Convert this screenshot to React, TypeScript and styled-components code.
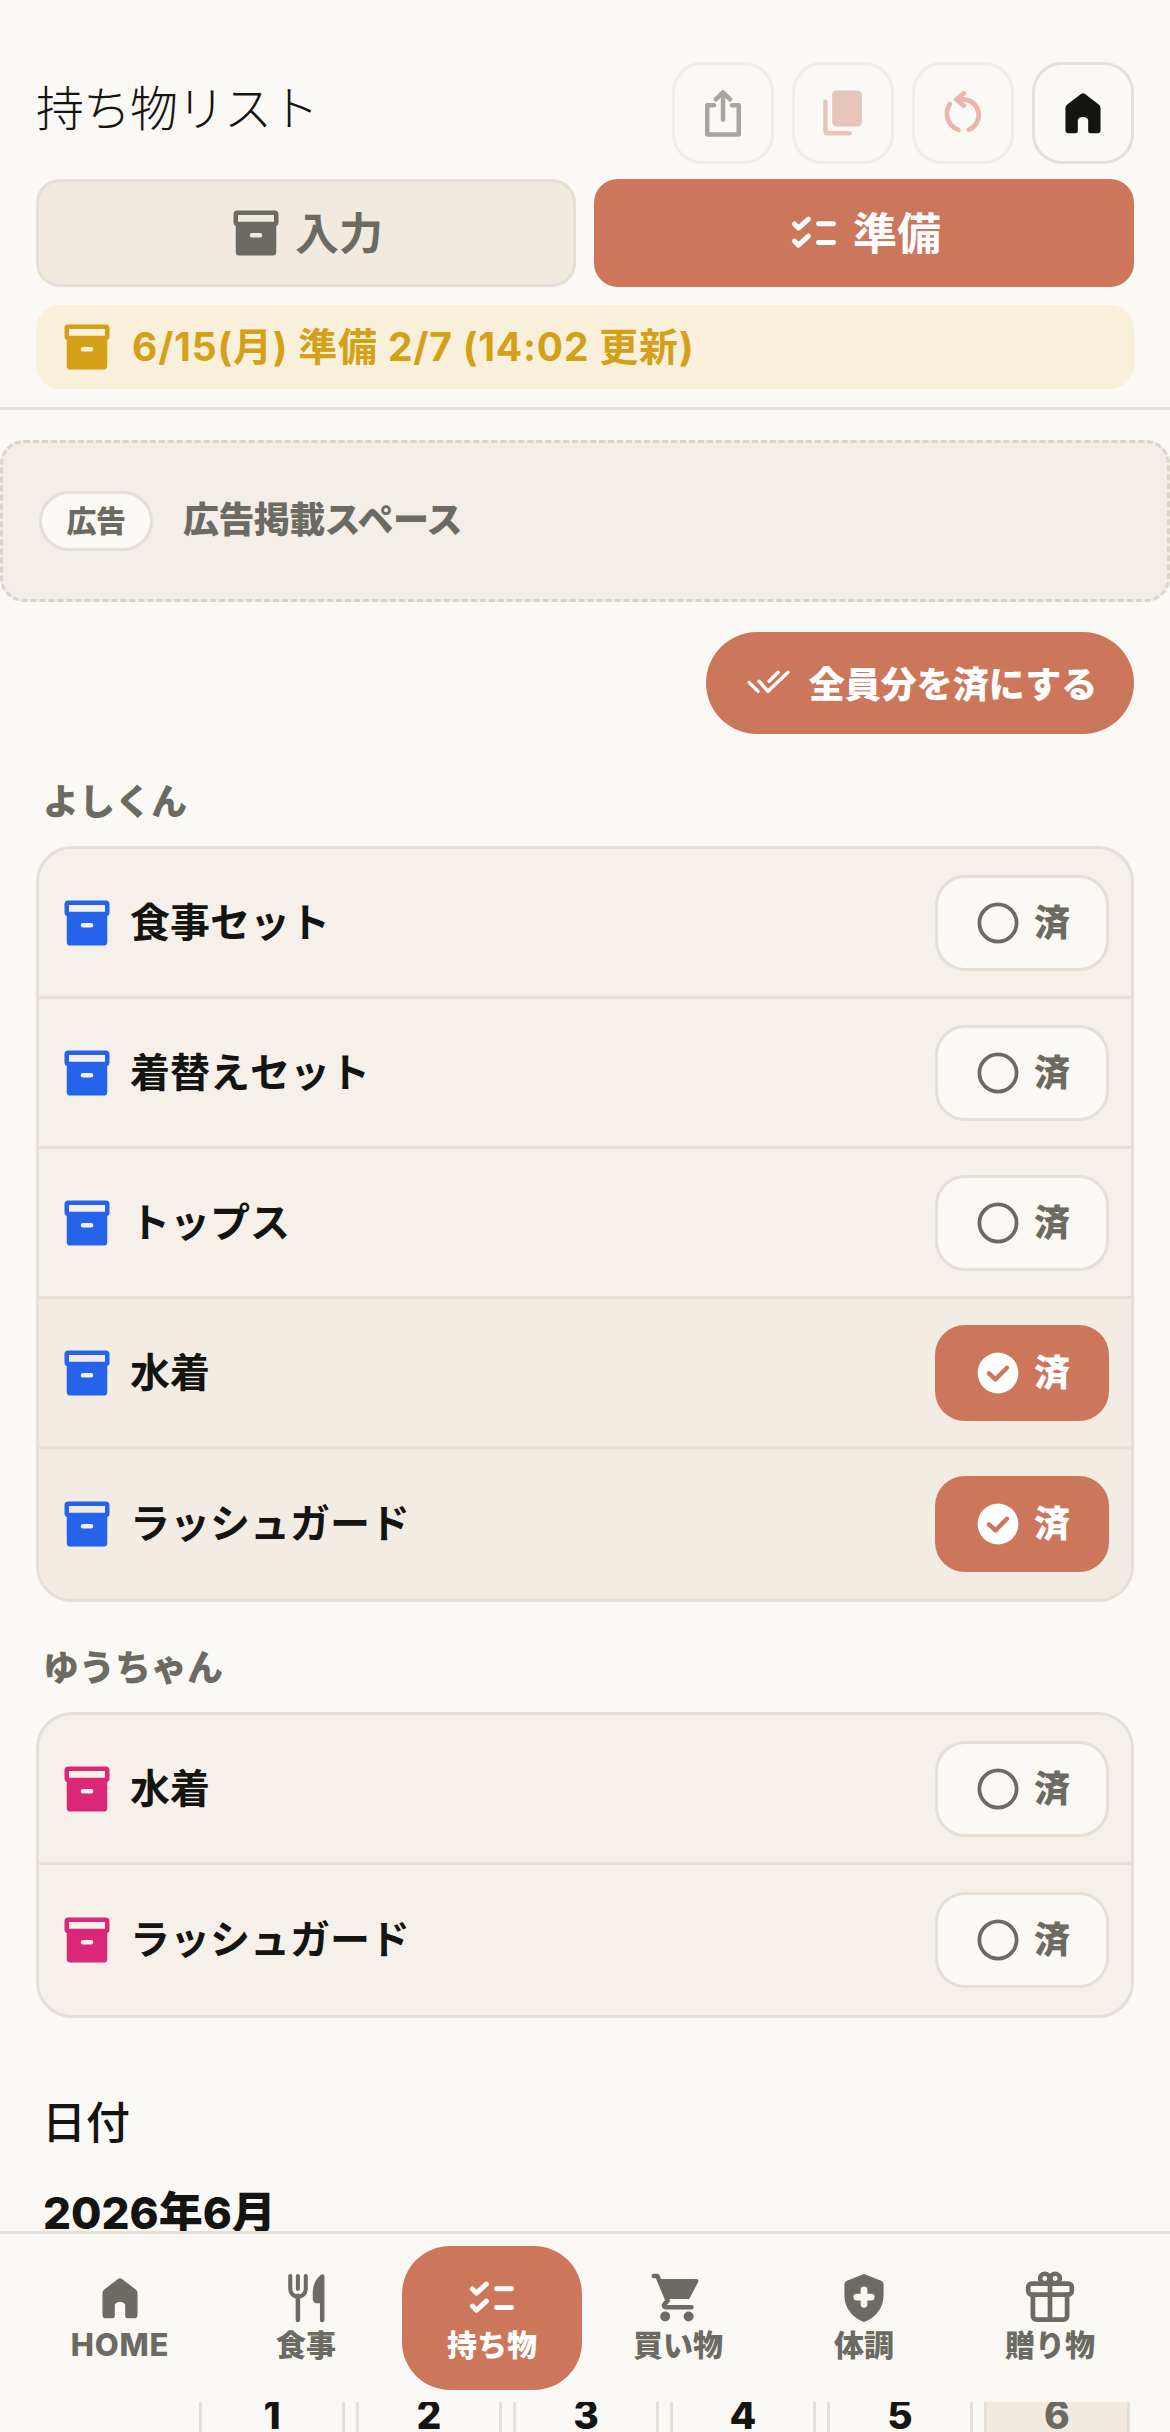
import React from 'react';
import styled, { createGlobalStyle } from 'styled-components';

const INK = '#141412';
const MUTED = '#6B6A63';
const ACCENT = '#CC775B';
const LINE = '#E5DFD8';
const PAGE = '#FBF9F5';
const FONT = '"Inter", "Noto Sans CJK JP", sans-serif';

const Global = createGlobalStyle`
  html, body { margin: 0; padding: 0; height: 2432px; overflow: hidden; background: ${PAGE}; }
  body { font-family: ${FONT}; color: ${INK}; }
  * { box-sizing: border-box; }
`;

const Page = styled.div`
  width: 1170px;
  height: 2432px;
  overflow: hidden;
`;
const Header = styled.header`
  padding: 62px 36px 18px;
  border-bottom: 3px solid ${LINE};
  display: flex;
  flex-direction: column;
`;
const TitleRow = styled.div`
  display: flex;
  align-items: center;
  justify-content: space-between;
  height: 102px;
`;
const Title = styled.h1`
  margin: 0;
  padding-bottom: 16px;
  font-family: "Liberation Serif", "Noto Sans CJK JP", serif;
  font-size: 48px;
  font-weight: 300;
  letter-spacing: -1px;
  color: ${INK};
`;
const ToolGroup = styled.div`
  display: flex;
  gap: 18px;
`;
const ToolButton = styled.button<{ $tone: string; $line: string }>`
  width: 102px;
  height: 102px;
  padding: 0;
  border-radius: 30px;
  border: 3px solid ${p => p.$line};
  background: ${PAGE};
  color: ${p => p.$tone};
  display: flex;
  align-items: center;
  justify-content: center;
`;
const Tabs = styled.div`
  display: grid;
  grid-template-columns: 1fr 1fr;
  gap: 18px;
  margin-top: 15px;
`;
const Tab = styled.button<{ $active?: boolean }>`
  height: 108px;
  padding: 0;
  border-radius: 24px;
  border: 3px solid ${p => (p.$active ? ACCENT : LINE)};
  background: ${p => (p.$active ? ACCENT : '#F1EBDF')};
  color: ${p => (p.$active ? '#FFFFFF' : MUTED)};
  font-family: ${FONT};
  font-size: 44px;
  font-weight: 700;
  display: flex;
  align-items: center;
  justify-content: center;
  gap: 12px;
`;
const Lifted = styled.span<{ $by: number }>`
  padding-bottom: ${p => p.$by}px;
`;
const Status = styled.div`
  margin-top: 18px;
  height: 84px;
  border-radius: 24px;
  background: #F8F0DA;
  color: #D4A017;
  padding: 0 0 0 24px;
  display: flex;
  align-items: center;
  gap: 18px;
  font-size: 39px;
  font-weight: 700;
  letter-spacing: 0.8px;
`;
const AdSlot = styled.div`
  margin-top: 30px;
  height: 162px;
  border: 3px dashed #DBD4C8;
  border-radius: 24px;
  background: #F3EEE7;
  padding: 0 36px;
  display: flex;
  align-items: center;
  gap: 30px;
  color: ${MUTED};
  font-size: 36px;
  font-weight: 800;
  letter-spacing: -0.6px;
`;
const AdBadge = styled.span`
  height: 60px;
  width: 114px;
  padding-bottom: 4px;
  border-radius: 30px;
  border: 3px solid ${LINE};
  background: ${PAGE};
  display: flex;
  align-items: center;
  justify-content: center;
  font-size: 30px;
  font-weight: 800;
`;
const BulkRow = styled.div`
  margin-top: 30px;
  padding: 0 36px;
  display: flex;
  justify-content: flex-end;
`;
const BulkButton = styled.button`
  height: 102px;
  width: 428px;
  border: 0;
  border-radius: 51px;
  background: ${ACCENT};
  color: #FFFFFF;
  font-family: ${FONT};
  font-size: 36px;
  font-weight: 800;
  display: flex;
  align-items: center;
  justify-content: center;
  gap: 12px;
  padding: 0;
`;
const Section = styled.section`
  margin-top: 42px;
  padding: 0 36px;
  &:first-of-type { margin-top: 44px; }
`;
const PersonName = styled.h2`
  margin: 0 0 20px 7px;
  font-size: 36px;
  line-height: 48px;
  font-weight: 800;
  color: ${MUTED};
`;
const Card = styled.div`
  border: 3px solid ${LINE};
  border-radius: 36px;
  background: #F5F0EA;
  overflow: hidden;
`;
const Row = styled.div<{ $done?: boolean }>`
  height: 147px;
  display: flex;
  align-items: center;
  padding: 0 22px 0 21px;
  background: ${p => (p.$done ? '#F3ECE5' : 'transparent')};
  & + & { box-sizing: content-box; border-top: 3px solid ${LINE}; }
  &:last-child { height: 150px; }
`;
const ItemIcon = styled.span<{ $color: string }>`
  color: ${p => p.$color};
  display: flex;
  margin-right: 16px;
`;
const ItemName = styled.span`
  flex: 1;
  padding-bottom: 6px;
  font-size: 40px;
  font-weight: 700;
  color: ${INK};
`;
const DoneButton = styled.button<{ $done?: boolean }>`
  width: 174px;
  height: 96px;
  padding: 0;
  border-radius: 30px;
  border: 3px solid ${p => (p.$done ? ACCENT : LINE)};
  background: ${p => (p.$done ? ACCENT : PAGE)};
  color: ${p => (p.$done ? '#FFFFFF' : MUTED)};
  font-family: ${FONT};
  font-size: 36px;
  font-weight: 800;
  display: flex;
  align-items: center;
  justify-content: center;
  gap: 12px;
`;
const DateSection = styled.section`
  padding: 81px 42px 0 44px;
`;
const DateLabel = styled.h2`
  margin: 0 0 0 -2px;
  font-size: 44px;
  line-height: 48px;
  font-weight: 500;
`;
const MonthTitle = styled.h3`
  margin: 39px 0 0 -1px;
  font-size: 44px;
  line-height: 54px;
  font-weight: 800;
`;
const Week = styled.div`
  margin: 88px 0 12px -2px;
  display: grid;
  grid-template-columns: repeat(7, 146px);
  column-gap: 11px;
  height: 50px;
  text-align: center;
  font-size: 33px;
  font-weight: 700;
  color: ${MUTED};
`;
const Days = styled.div`
  margin-left: -2px;
  display: grid;
  grid-template-columns: repeat(7, 146px);
  column-gap: 11px;
`;
const Day = styled.div<{ $empty?: boolean; $sat?: boolean }>`
  height: 200px;
  text-align: center;
  padding-top: 1px;
  font-size: 39px;
  line-height: 48px;
  font-weight: 800;
  border-left: 3px solid ${p => (p.$empty ? 'transparent' : LINE)};
  border-right: 3px solid ${p => (p.$empty ? 'transparent' : LINE)};
  background: ${p => (p.$sat ? '#F1EBDF' : 'transparent')};
  color: ${p => (p.$sat ? MUTED : INK)};
`;
const Nav = styled.nav`
  position: fixed;
  left: 0;
  right: 0;
  bottom: 30px;
  height: 171px;
  background: #FAF8F4;
  border-top: 3px solid ${LINE};
  padding: 12px 30px;
  display: grid;
  grid-template-columns: repeat(6, 180px);
  column-gap: 6px;
`;
const NavItem = styled.a<{ $active?: boolean }>`
  height: 144px;
  border-radius: 48px;
  background: ${p => (p.$active ? ACCENT : 'transparent')};
  color: ${p => (p.$active ? '#FFFFFF' : MUTED)};
  display: flex;
  flex-direction: column;
  align-items: center;
  justify-content: center;
  font-size: 30px;
  line-height: 40px;
  font-weight: 800;
`;
const NavLatin = styled.span`
  font-size: 31px;
  letter-spacing: 0.8px;
`;

type IconProps = { size?: number };
const Svg: React.FC<React.PropsWithChildren<IconProps>> = ({ size = 54, children }) => (
  <svg width={size} height={size} viewBox="0 0 24 24" fill="none" stroke="none">{children}</svg>
);
const line = { stroke: 'currentColor', strokeLinecap: 'round', strokeLinejoin: 'round' } as const;

const ArchiveIcon = () => (
  <Svg>
    <path fill="currentColor" fillRule="evenodd" d="M3.6 2H20.4A1.6 1.6 0 0 1 22 3.6V7.4a1.6 1.6 0 0 1-1 1.5V20.4a1.6 1.6 0 0 1-1.6 1.6H4.6A1.6 1.6 0 0 1 3 20.4V8.9A1.6 1.6 0 0 1 2 7.4V3.6A1.6 1.6 0 0 1 3.6 2ZM4 4V7H20V4ZM10.2 12a1 1 0 0 0 0 2h3.6a1 1 0 0 0 0-2Z" />
  </Svg>
);
const ChecklistIcon = () => (
  <Svg>
    <path {...line} strokeWidth={2.2} d="M3.3 8l1.8 1.8L9.5 5.8M3.3 15.6l1.8 1.8 4.4-4M14 7.9h6.7M14 16.2h6.7" />
  </Svg>
);
const ShareIcon = () => (
  <Svg>
    <path {...line} strokeWidth={2} d="M8 8.5H5v13h14v-13h-3M12 15V2.9M8.8 5.9 12 2.8l3.2 3.1" />
  </Svg>
);
const CopyIcon = () => (
  <Svg>
    <rect x="7.2" y="2" width="13.2" height="16" rx="2" fill="currentColor" />
    <path {...line} strokeWidth={2} d="M4.2 7V20a1 1 0 0 0 1 1H15" />
  </Svg>
);
const ResetIcon = () => (
  <Svg>
    <path {...line} strokeWidth={2.1} d="M12.4 3.2 9 6l3.4 2.7M10 5.9h2a7 7 0 0 1 2.6 13.5M6.2 8A7.6 7.6 0 0 0 10 19.5" />
  </Svg>
);
const HomeIcon = () => (
  <Svg>
    <path fill="currentColor" d="M11.1 3.6a1.5 1.5 0 0 1 1.8 0l6.1 4.6a2 2 0 0 1 .8 1.6v9.7a1.5 1.5 0 0 1-1.5 1.5h-3a1 1 0 0 1-1-1v-5a2 2 0 0 0-2-1.2h-.6a2 2 0 0 0-2 1.2v5a1 1 0 0 1-1 1h-3a1.5 1.5 0 0 1-1.5-1.5V9.8a2 2 0 0 1 .8-1.6z" />
  </Svg>
);
const DoubleCheckIcon = () => (
  <Svg>
    <path {...line} strokeWidth={1.5} d="M2.7 11.7l4 4M7.1 11.2l4 4.5L20 7.2M11.6 11.2l4-4" />
  </Svg>
);
const RadioIcon = ({ done }: { done?: boolean }) => (
  <Svg size={48}>
    {done ? (
      <>
        <circle cx="12" cy="12" r="10.2" fill="#FFFFFF" />
        <path d="M7.5 12.2l3.2 3 5.8-5.8" stroke={ACCENT} strokeWidth={2.2} strokeLinecap="round" strokeLinejoin="round" />
      </>
    ) : (
      <circle cx="12" cy="12" r="9.3" stroke="currentColor" strokeWidth={1.9} />
    )}
  </Svg>
);
const ForkIcon = () => (
  <Svg>
    <path {...line} strokeWidth={1.8} d="M5 2.2V8a3.45 3.45 0 0 0 6.9 0V2.2M8.4 2.2V8" />
    <path {...line} strokeWidth={2} d="M8.4 11V21.8" />
    <path fill="currentColor" d="M20.2 2.2a.9.9 0 0 0-1.3-.7C16.5 3 15 6 15 10v2.5c0 1 .8 1.8 1.8 1.8h1.4v7.5a1 1 0 0 0 2 0z" />
  </Svg>
);
const CartIcon = () => (
  <Svg>
    <path fill="currentColor" d="M4.2 3.6H20.3a.8.8 0 0 1 .7 1.2L17 12.4H7Z" />
    <path {...line} strokeWidth={2} d="M1.2 2.2H2.8L7.4 13.2 5.9 14.8a.8.8 0 0 0 .7 1.3H18" />
    <circle cx="6.3" cy="20.2" r="2.2" fill="currentColor" />
    <circle cx="16.7" cy="20.2" r="2.2" fill="currentColor" />
  </Svg>
);
const ShieldIcon = () => (
  <Svg>
    <path fill="currentColor" d="M11.4 1.5a1.6 1.6 0 0 1 1.2 0l7 2.8a1.6 1.6 0 0 1 1.1 1.5V11c0 5.5-3.7 10-8.7 11.7C7 21 3.3 16.5 3.3 11V5.8a1.6 1.6 0 0 1 1.1-1.5z" />
    <path d="M12 8.4v6.4M8.8 11.6h6.4" stroke="#FAF8F4" strokeWidth={3} strokeLinecap="round" />
  </Svg>
);
const GiftIcon = () => (
  <Svg>
    <rect x="2.3" y="5.6" width="19.4" height="4.9" rx="1.6" {...line} strokeWidth={2.1} />
    <path {...line} strokeWidth={2.1} d="M4.4 10.5V20a1.6 1.6 0 0 0 1.6 1.6h12a1.6 1.6 0 0 0 1.6-1.6v-9.5M12 5.6v16" />
    <circle cx="9.7" cy="3.3" r="2.1" {...line} strokeWidth={2} />
    <circle cx="14.3" cy="3.3" r="2.1" {...line} strokeWidth={2} />
  </Svg>
);

type Item = { name: string; done?: boolean };
const people: { name: string; color: string; items: Item[] }[] = [
  {
    name: 'よしくん',
    color: '#2563EB',
    items: [
      { name: '食事セット' },
      { name: '着替えセット' },
      { name: 'トップス' },
      { name: '水着', done: true },
      { name: 'ラッシュガード', done: true },
    ],
  },
  {
    name: 'ゆうちゃん',
    color: '#DB2777',
    items: [{ name: '水着' }, { name: 'ラッシュガード' }],
  },
];

const navItems = [
  { label: <NavLatin>HOME</NavLatin>, key: 'home', icon: <HomeIcon /> },
  { label: '食事', key: 'meal', icon: <ForkIcon /> },
  { label: '持ち物', key: 'items', icon: <ChecklistIcon />, active: true },
  { label: '買い物', key: 'shop', icon: <CartIcon /> },
  { label: '体調', key: 'health', icon: <ShieldIcon /> },
  { label: '贈り物', key: 'gift', icon: <GiftIcon /> },
];

const days = ['', '1', '2', '3', '4', '5', '6'];
const weekdays = ['日', '月', '火', '水', '木', '金', '土'];

export default function App() {
  return (
    <Page>
      <Global />
      <Header>
        <TitleRow>
          <Title>持ち物リスト</Title>
          <ToolGroup>
            <ToolButton $tone="#A6A69F" $line="#F0EEE9"><ShareIcon /></ToolButton>
            <ToolButton $tone="#E8C5BA" $line="#F0EEE9"><CopyIcon /></ToolButton>
            <ToolButton $tone="#E8B5AF" $line="#F0EEE9"><ResetIcon /></ToolButton>
            <ToolButton $tone={INK} $line={LINE}><HomeIcon /></ToolButton>
          </ToolGroup>
        </TitleRow>
        <Tabs>
          <Tab><ArchiveIcon /><Lifted $by={4}>入力</Lifted></Tab>
          <Tab $active><ChecklistIcon /><Lifted $by={4}>準備</Lifted></Tab>
        </Tabs>
        <Status>
          <ArchiveIcon />
          <Lifted $by={6}>6/15(月) 準備 2/7 (14:02 更新)</Lifted>
        </Status>
      </Header>
      <AdSlot>
        <AdBadge>広告</AdBadge>
        <Lifted $by={9}>広告掲載スペース</Lifted>
      </AdSlot>
      <BulkRow>
        <BulkButton><DoubleCheckIcon /><Lifted $by={3}>全員分を済にする</Lifted></BulkButton>
      </BulkRow>
      {people.map(person => (
        <Section key={person.name}>
          <PersonName>{person.name}</PersonName>
          <Card>
            {person.items.map(item => (
              <Row key={item.name} $done={item.done}>
                <ItemIcon $color={person.color}><ArchiveIcon /></ItemIcon>
                <ItemName>{item.name}</ItemName>
                <DoneButton $done={item.done}><RadioIcon done={item.done} /><Lifted $by={6}>済</Lifted></DoneButton>
              </Row>
            ))}
          </Card>
        </Section>
      ))}
      <DateSection>
        <DateLabel>日付</DateLabel>
        <MonthTitle>2026年6月</MonthTitle>
        <Week>{weekdays.map(w => <span key={w}>{w}</span>)}</Week>
        <Days>
          {days.map((d, i) => <Day key={i} $empty={!d} $sat={i === 6}>{d}</Day>)}
        </Days>
      </DateSection>
      <Nav>
        {navItems.map(n => (
          <NavItem key={n.key} $active={n.active}>{n.icon}{n.label}</NavItem>
        ))}
      </Nav>
    </Page>
  );
}
